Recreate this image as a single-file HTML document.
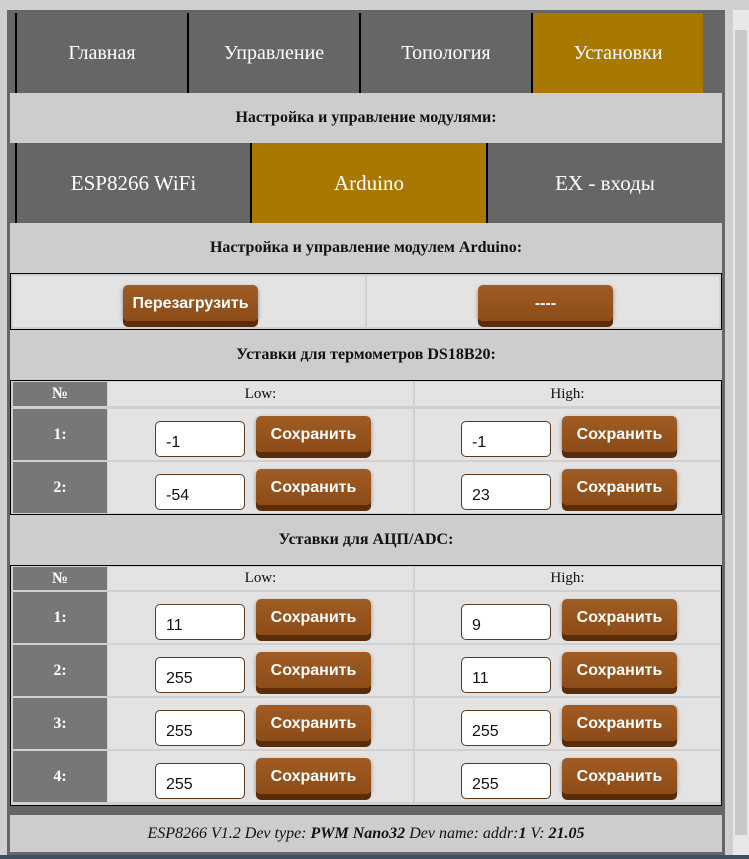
<!DOCTYPE html>
<html><head><meta charset="utf-8"><style>
*{box-sizing:border-box;margin:0;padding:0}
body{width:749px;height:859px;background:#cfcfcf;font-family:"Liberation Serif",serif;position:relative;overflow:hidden}
#wrap{position:absolute;left:7px;top:10px;width:718px;height:849px;background:#666}
.abs{position:absolute}
.tab{position:absolute;top:13px;height:80px;background:#666;color:#fff;font-size:20px;display:flex;align-items:center;justify-content:center;border-left:2px solid #000}
.tab2{top:143px;height:80px;font-size:21px}
.on{background:#a87800}
.band{position:absolute;left:10px;width:712px;background:#cdcdcd;font-weight:bold;font-size:16px;display:flex;align-items:center;justify-content:center;color:#111}
.tbl{position:absolute;left:10px;width:712px;border:1px solid #000;background:#d0d0d0}
.c{position:absolute;background:#e3e3e3}
.n{position:absolute;background:#777;color:#fff;font-weight:bold;font-size:16px;display:flex;align-items:center;justify-content:center}
.h{font-size:15px;color:#111;display:flex;align-items:center;justify-content:center}
.inp{position:absolute;width:90px;height:36px;background:#fff;border:1px solid #5a3a1a;border-radius:5px;font-family:"Liberation Sans",sans-serif;font-size:16px;padding:12px 0 0 10px;color:#111}
.btn{position:absolute;width:115px;border-radius:5px;background:linear-gradient(#a05c24,#8c4c18);box-shadow:0 6px 0 #5c2c08,0 2px 4px rgba(0,0,0,.4);color:#fff;font-family:"Liberation Sans",sans-serif;font-weight:bold;font-size:16px;text-align:center;padding-top:10px;height:36px}
</style></head><body>
<div id="wrap"></div>
<div class="abs" style="left:733px;top:10px;width:16px;height:845px;background:#e8e8e8"></div>
<div class="abs" style="left:735px;top:30px;width:12px;height:805px;background:#c8c8c8"></div>
<div class="abs" style="left:0;top:855px;width:749px;height:4px;background:#3a5068"></div>

<div class="tab" style="left:15px;width:172px">Главная</div>
<div class="tab" style="left:187px;width:172px">Управление</div>
<div class="tab" style="left:359px;width:172px">Топология</div>
<div class="tab on" style="left:531px;width:172px;border-left-color:#000">Установки</div>

<div class="band" style="top:93px;height:50px">Настройка и управление модулями:</div>
<div class="tab tab2" style="left:15px;width:235px">ESP8266 WiFi</div>
<div class="tab tab2 on" style="left:250px;width:236px">Arduino</div>
<div class="tab tab2" style="left:486px;width:236px">EX - входы</div>
<div class="band" style="top:223px;height:50px">Настройка и управление модулем Arduino:</div>

<div class="tbl" style="top:273px;height:57px">
 <div class="c" style="left:2px;top:2px;width:352px;height:51px"></div>
 <div class="c" style="left:356px;top:2px;width:352px;height:51px"></div>
</div>
<div class="btn" style="left:123px;top:285px;width:135px">Перезагрузить</div>
<div class="btn" style="left:478px;top:285px;width:135px">----</div>

<div class="band" style="top:330px;height:50px">Уставки для термометров DS18B20:</div>
<div class="tbl" style="top:380px;height:135px"></div>
<div class="n" style="left:13px;top:382px;width:94px;height:24px">№</div>
<div class="c h" style="left:108px;top:382px;width:305px;height:24px">Low:</div>
<div class="c h" style="left:415px;top:382px;width:305px;height:24px">High:</div>

<div class="band" style="top:515px;height:50px">Уставки для АЦП/ADC:</div>
<div class="tbl" style="top:565px;height:241px"></div>
<div class="n" style="left:13px;top:567px;width:94px;height:23px">№</div>
<div class="c h" style="left:108px;top:567px;width:305px;height:23px">Low:</div>
<div class="c h" style="left:415px;top:567px;width:305px;height:23px">High:</div>

<div id="rows"></div>
<div class="band" style="top:815px;height:37px;font-weight:normal;font-style:italic;font-size:16px">ESP8266 V1.2 Dev type:&nbsp;<b>PWM Nano32</b>&nbsp;Dev name: addr:<b>1</b>&nbsp;V:&nbsp;<b>21.05</b></div>
<script>
var R=[[409,'1:','-1','-1'],[462,'2:','-54','23'],[592,'1:','11','9'],[645,'2:','255','11'],[698,'3:','255','255'],[751,'4:','255','255']];
var h='';
R.forEach(function(r){var y=r[0];
h+='<div class="n" style="left:13px;top:'+y+'px;width:94px;height:51px">'+r[1]+'</div>';
h+='<div class="c" style="left:108px;top:'+y+'px;width:305px;height:51px"></div>';
h+='<div class="c" style="left:415px;top:'+y+'px;width:305px;height:51px"></div>';
h+='<div class="inp" style="left:155px;top:'+(y+12)+'px">'+r[2]+'</div>';
h+='<div class="btn" style="left:256px;top:'+(y+7)+'px">Сохранить</div>';
h+='<div class="inp" style="left:461px;top:'+(y+12)+'px">'+r[3]+'</div>';
h+='<div class="btn" style="left:562px;top:'+(y+7)+'px">Сохранить</div>';});
document.getElementById('rows').innerHTML=h;
</script>
</body></html>
